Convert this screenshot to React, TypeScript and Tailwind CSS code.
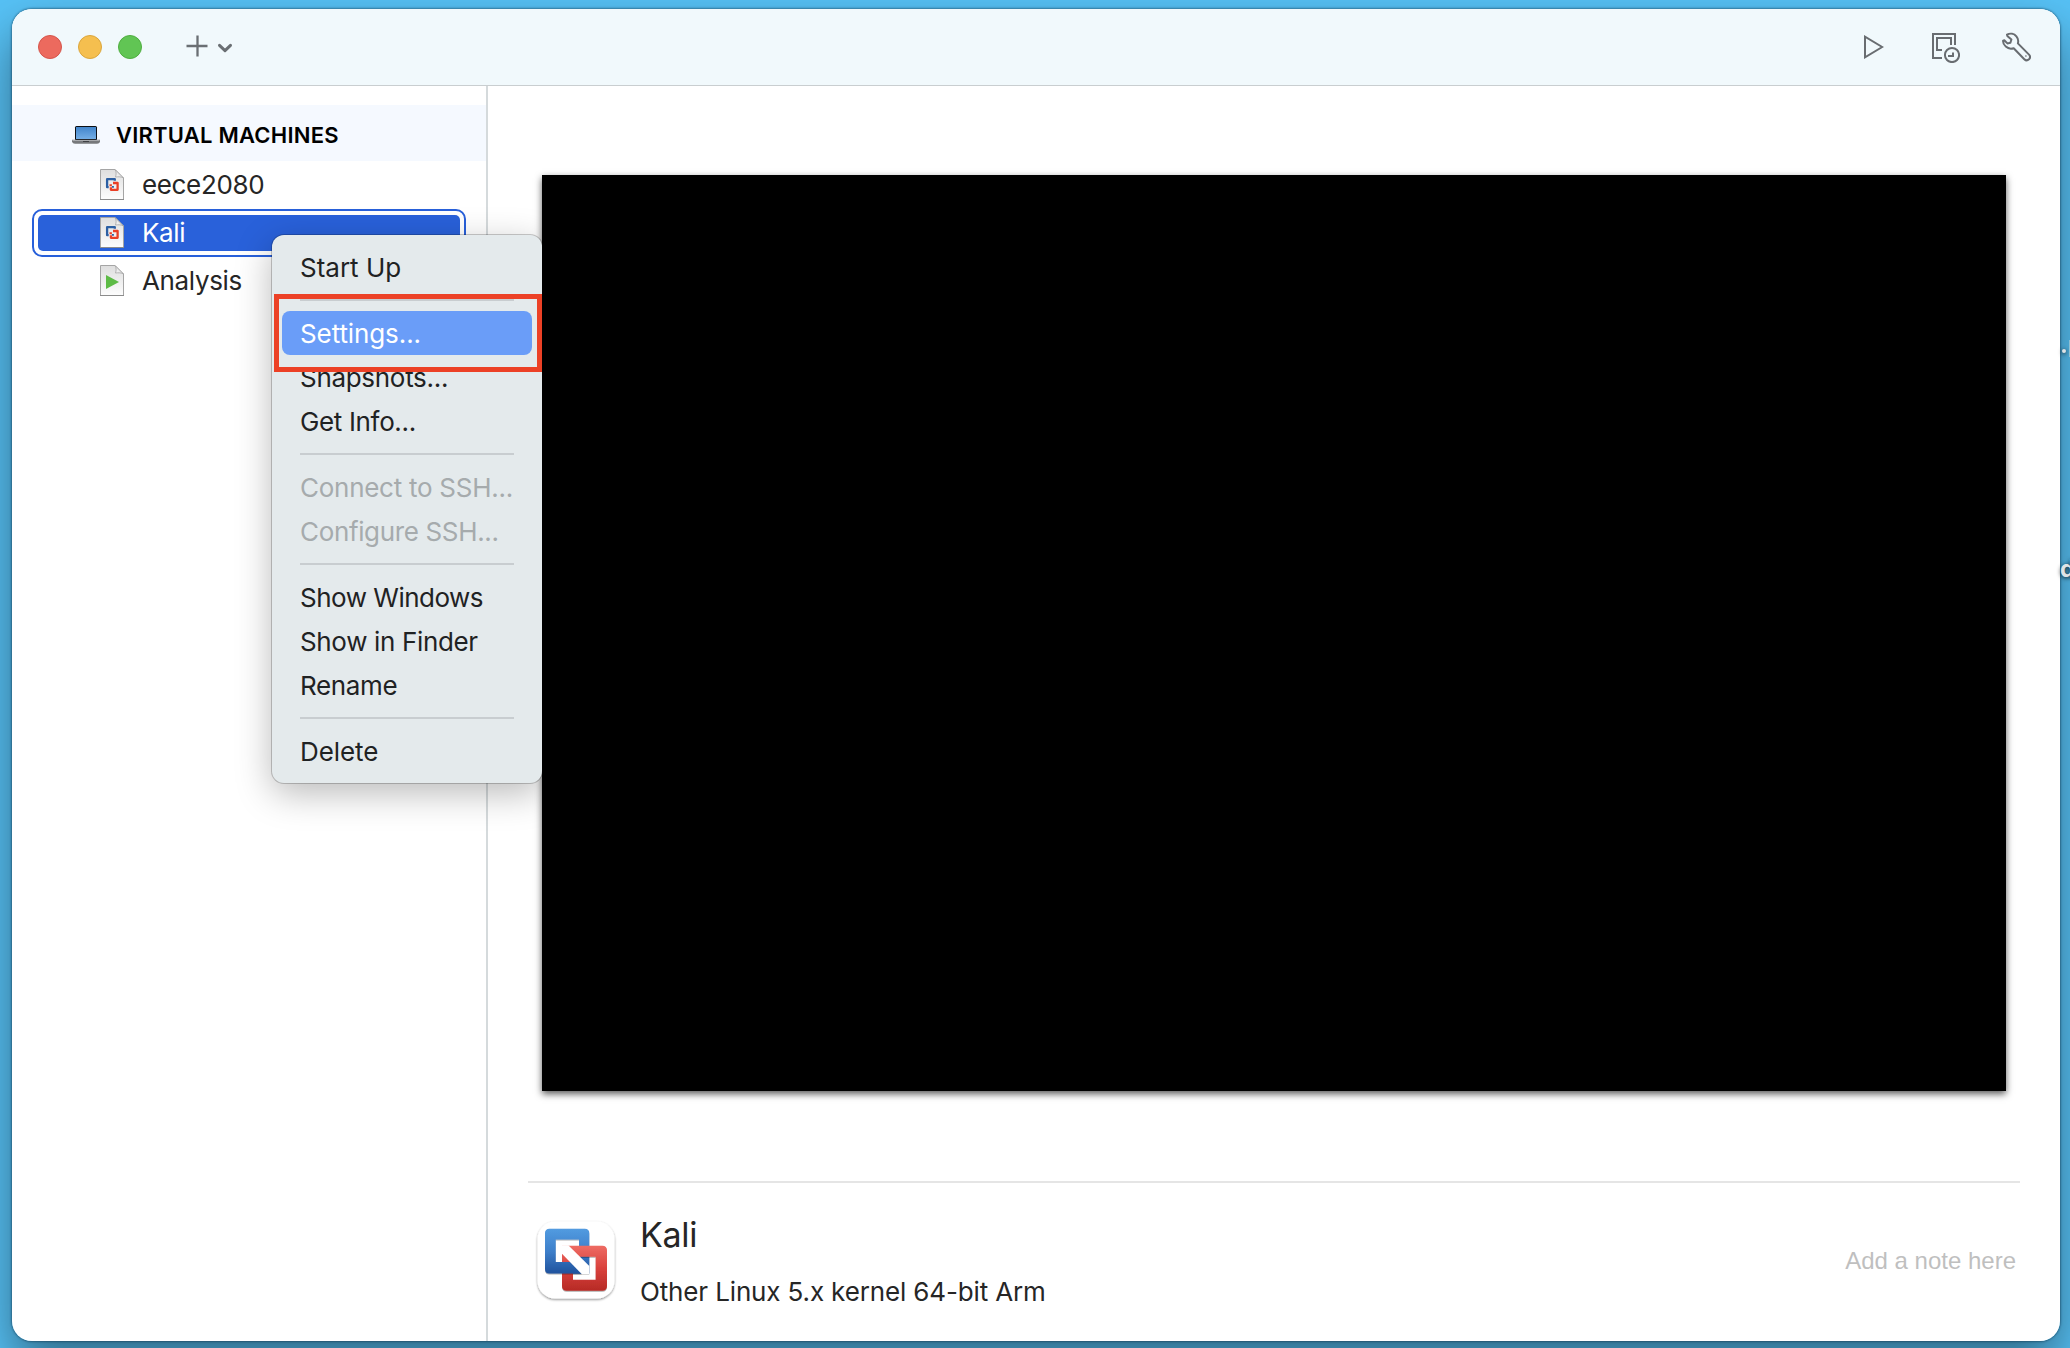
import React from "react";

const SANS = "font-['Inter','Liberation_Sans',sans-serif]";

function PlusIcon() {
  return (
    <svg width="22" height="22" viewBox="0 0 22 22" fill="none" stroke="#6a6f73" strokeWidth="2.3">
      <path d="M11.500 .5v21M.5 11h21" />
    </svg>
  );
}

function ChevronIcon() {
  return (
    <svg width="16" height="12" viewBox="0 0 16 12" fill="none" stroke="#6a6f73" strokeWidth="3" strokeLinecap="round" strokeLinejoin="round">
      <path d="M2.500 3.300 8 8.600l5.500-5.300" />
    </svg>
  );
}

function PlayIcon() {
  return (
    <svg width="20" height="24" viewBox="0 0 20 24" fill="none" stroke="#696d71" strokeWidth="2">
      <path d="M1 1.700v20.600L18.200 12z" />
    </svg>
  );
}

function SnapshotIcon() {
  return (
    <svg width="28" height="30" viewBox="0 0 28 30" fill="none" stroke="#696d71" strokeWidth="2">
      <path d="M10 25H1V1h22v11" />
      <path d="M10 17H5V5h14v7" />
      <circle cx="20" cy="22" r="7.100" />
      <path d="M21 19.500V23h-5" />
    </svg>
  );
}

function WrenchIcon() {
  return (
    <svg width="29" height="30" viewBox="0 0 29 30" fill="none" stroke="#696d71" strokeWidth="2" strokeLinejoin="round">
      <path d="M5 2.600C8.200.900 12.200 1.600 14.400 4.300c1.700 2 2.200 4.500 1.500 7.100L27 22.600c1.300 1.400 1.200 3.400 0 4.700-1.300 1.200-3.400 1.200-4.700-.1L11.700 16.200c-2.800.9-5.700.4-7.900-1.600C1.700 12.800.900 10.700 1.100 8.600l1.200-.3 3.100 3.100 3-.6 1-3.300L5.300 3.900z" />
      <path d="M23.300 24h1.200" strokeWidth="1.600" />
    </svg>
  );
}

function LaptopIcon() {
  return (
    <svg width="28" height="20" viewBox="0 0 28 20">
      <defs>
        <linearGradient id="screen" x1="0" y1="0" x2="0" y2="1">
          <stop offset="0" stopColor="#4285cb" />
          <stop offset="1" stopColor="#74aee6" />
        </linearGradient>
      </defs>
      <rect x="3" y="1" width="22" height="14.500" rx="1.500" fill="#0c0f14" />
      <rect x="4" y="2" width="20" height="12" fill="url(#screen)" />
      <path d="M0 14.800h28v2c-.5 1.300-1.500 2-3 2H3c-1.500 0-2.500-.7-3-2z" fill="#77797c" />
      <path d="M.5 15.500h27" stroke="#a8aaad" />
      <path d="M11 16.500h6" stroke="#3f4144" />
    </svg>
  );
}

function DocIcon({ kind }: { kind: "vm" | "play" }) {
  return (
    <svg width="26" height="34" viewBox="0 0 26 34">
      <defs>
        <linearGradient id="paper" x1="0" y1="0" x2="0" y2="1">
          <stop offset="0" stopColor="#dedede" />
          <stop offset="1" stopColor="#fdfdfd" />
        </linearGradient>
        <linearGradient id="fold" x1="0" y1="1" x2="1" y2="0">
          <stop offset="0" stopColor="#fff" />
          <stop offset="1" stopColor="#c9c9c9" />
        </linearGradient>
      </defs>
      <path d="M1.500 1.500H16l8.500 8.500v21.500h-23z" fill="url(#paper)" stroke="#a5a5a5" />
      <path d="M1 31.500h24" stroke="#8c8c8c" />
      <path d="M16 1.500c1.500 2.500 1.300 5 .5 7.500 3-.4 6-.3 8 1z" fill="url(#fold)" stroke="#a5a5a5" strokeWidth=".8" />
      {kind === "vm" ? (
        <g fill="none" strokeWidth="2.300" strokeLinejoin="round">
          <path d="M9.700 19.200H8.100V11.200h7.700v1.600" stroke="#2c5fa3" />
          <path d="M14 15h4.600v6.800h-6.700v-2.600" stroke="#ea3f25" />
          <path d="M10.500 17.300h2.400" stroke="#ea3f25" strokeWidth="2" />
          <path d="M12.900 18.900h2" stroke="#2c5fa3" strokeWidth="1.600" />
        </g>
      ) : (
        <path d="M7 11v14L20 18z" fill="#5dbb46" />
      )}
    </svg>
  );
}

function FusionLogo() {
  return (
    <svg width="82" height="84" viewBox="0 0 82 84">
      <defs>
        <linearGradient id="blue" gradientUnits="userSpaceOnUse" x1="0" y1="10" x2="0" y2="54.500">
          <stop offset="0" stopColor="#529be0" />
          <stop offset=".5" stopColor="#3d7fca" />
          <stop offset="1" stopColor="#20529d" />
        </linearGradient>
        <linearGradient id="red" gradientUnits="userSpaceOnUse" x1="0" y1="27" x2="0" y2="72">
          <stop offset="0" stopColor="#ee6b63" />
          <stop offset=".5" stopColor="#d9413c" />
          <stop offset="1" stopColor="#b62a25" />
        </linearGradient>
        <filter id="soft" x="-20%" y="-20%" width="140%" height="140%">
          <feDropShadow dx="0" dy="1.200" stdDeviation="1" floodColor="#000" floodOpacity=".45" />
        </filter>
        <filter id="edge" x="-20%" y="-20%" width="140%" height="140%">
          <feDropShadow dx="0" dy=".8" stdDeviation=".4" floodColor="#000" floodOpacity=".4" />
        </filter>
      </defs>
      <rect x="2.500" y="2.500" width="77" height="77" rx="17.500" fill="#fff" filter="url(#soft)" />
      <path
        fillRule="evenodd"
        fill="url(#blue)"
        filter="url(#edge)"
        d="M14.500 9.800h35.300q4.500 0 4.500 4.500v40.200H14.500q-4.500 0-4.500-4.500V14.300q0-4.500 4.500-4.500zM20.700 20.500v22.600H44V20.500z"
      />
      <path
        fillRule="evenodd"
        fill="url(#red)"
        filter="url(#edge)"
        d="M27 26.800h40.200q4.800 0 4.800 4.800V67q0 4.800-4.800 4.800H31.800Q27 71.800 27 67zM38 37.800v23h22.700v-23z"
      />
      <path d="M27 43.100h8.500l11.400 11.400H27z" fill="url(#blue)" filter="url(#edge)" />
      <path d="M26.500 26.300h6.800L54.300 47.100v8H46.700L27 34.800z" fill="#fff" />
    </svg>
  );
}

function VmRow({ name, kind, selected }: { name: string; kind: "vm" | "play"; selected?: boolean }) {
  return (
    <div
      className={
        selected
          ? "ml-5 mr-[20px] h-12 rounded-[10px] border-2 border-[#2860da] bg-white p-1"
          : "ml-5 mr-[20px] h-12 p-1.5"
      }
    >
      <div
        className={
          selected
            ? "flex h-full items-center gap-[17px] rounded-[5px] bg-[#2961da] pl-[61px] text-white"
            : "flex h-full items-center gap-[17px] pl-[61px] text-[#262626]"
        }
      >
        <DocIcon kind={kind} />
        <span className="text-[26px] leading-none tracking-[-0.35px]">{name}</span>
      </div>
    </div>
  );
}

type Entry = { label: string; state?: "active" | "disabled"; tracking?: string } | "separator";

const MENU: Entry[] = [
  { label: "Start Up", tracking: "tracking-normal" },
  "separator",
  { label: "Settings...", state: "active", tracking: "tracking-[-0.1px]" },
  { label: "Snapshots...", tracking: "tracking-[-0.3px]" },
  { label: "Get Info...", tracking: "tracking-[-0.35px]" },
  "separator",
  { label: "Connect to SSH...", state: "disabled", tracking: "tracking-[-0.27px]" },
  { label: "Configure SSH...", state: "disabled", tracking: "tracking-[-0.35px]" },
  "separator",
  { label: "Show Windows", tracking: "tracking-[-0.5px]" },
  { label: "Show in Finder", tracking: "tracking-[-0.35px]" },
  { label: "Rename", tracking: "tracking-[-0.35px]" },
  "separator",
  { label: "Delete", tracking: "tracking-[-0.1px]" },
];

function ContextMenu() {
  return (
    <div className="absolute left-[260px] top-[226px] w-[270px] rounded-xl bg-[#e4eaec] p-2.5 shadow-[0_0_0_1px_rgba(0,0,0,0.2),0_10px_36px_rgba(0,0,0,0.28)]">
      {MENU.map((entry, i) =>
        entry === "separator" ? (
          <div key={i} className="flex h-[22px] items-center pl-[18px] pr-[18px]">
            <div className="h-0.5 w-full bg-[#c8cdd0]" />
          </div>
        ) : (
          <div
            key={i}
            className={
              "flex h-11 items-center whitespace-nowrap rounded-lg pl-[18px] pt-[2px] text-[26px] leading-none " +
              (entry.tracking ?? "") +
              (entry.state === "active"
                ? " bg-[#6a9df8] text-white"
                : entry.state === "disabled"
                  ? " text-[#a6abad]"
                  : " text-[#1f2223]")
            }
          >
            {entry.label}
          </div>
        ),
      )}
      <div className="absolute left-0.5 top-[59px] h-[78px] w-[268px] border-[5px] border-[#ec4126]" />
    </div>
  );
}

function DesktopLabels() {
  return (
    <div className="absolute right-0 top-0 h-full w-[10px] text-[24px] font-bold leading-none text-[#dfe3e6] [text-shadow:0_1px_4px_rgba(0,0,0,0.8)]">
      <div className="absolute left-[2px] top-[349px] size-1 rounded-full bg-[#dfe3e6] shadow-[0_1px_4px_rgba(0,0,0,0.8)]" />
      <div className="absolute right-0 top-[340px] h-[17px] w-px bg-[#8fc0d4]" />
      <span className="absolute left-0 top-[557px]">d</span>
    </div>
  );
}

export default function App() {
  return (
    <div className={`relative h-[1348px] w-[2070px] overflow-hidden bg-[#57c2f6] pl-3 pt-[9px] ${SANS}`}>
      <div className="relative h-[1332px] w-[2048px] rounded-[20px] shadow-[0_0_2px_1px_rgba(0,30,50,0.4),0_24px_50px_rgba(0,0,0,0.45)]">
        <div className="flex h-full flex-col overflow-hidden rounded-[20px] bg-white">
          <header className="flex h-[77px] shrink-0 items-center border-b border-[#c9ced0] bg-[#f1f9fc] pl-[26px] pr-[29px]">
            <div className="flex gap-4">
              <div className="size-6 rounded-full border border-[#d5554b] bg-[#ec6a5e]" />
              <div className="size-6 rounded-full border border-[#dba63c] bg-[#f5bf4f]" />
              <div className="size-6 rounded-full border border-[#4fae40] bg-[#61c554]" />
            </div>
            <div className="ml-11 flex items-center gap-[9px] pb-[3px]">
              <PlusIcon />
              <div className="pt-[5px]">
                <ChevronIcon />
              </div>
            </div>
            <div className="ml-auto flex items-center">
              <PlayIcon />
              <div className="ml-12 pt-0.5">
                <SnapshotIcon />
              </div>
              <div className="ml-[42px]">
                <WrenchIcon />
              </div>
            </div>
          </header>
          <div className="flex min-h-0 flex-1">
            <aside className="w-[476px] shrink-0 border-r-2 border-[#d5dadc] pt-[19px]">
              <div className="flex h-14 items-center gap-[16px] bg-[#f5f9ff] pl-[60px] pt-[3px]">
                <LaptopIcon />
                <span className="text-[22px] font-semibold leading-none tracking-[0.22px] text-black">VIRTUAL MACHINES</span>
              </div>
              <VmRow name="eece2080" kind="vm" />
              <VmRow name="Kali" kind="vm" selected />
              <VmRow name="Analysis" kind="play" />
            </aside>
            <main className="flex min-w-0 flex-1 flex-col pl-10 pr-10 pt-[89px]">
              <div className="ml-[14px] h-[916px] w-[1464px] bg-black shadow-[0_3px_7px_rgba(0,0,0,0.65)]" />
              <div className="mt-[90px] h-0.5 bg-[#e5e5e5]" />
              <div className="mt-[30px] flex items-center pl-[7px] pr-1">
                <div className="pt-px">
                  <FusionLogo />
                </div>
                <div className="ml-[23px] flex flex-col text-[#262626]">
                  <span className="text-[34px] leading-[44px] tracking-[-0.3px]">Kali</span>
                  <span className="mt-[19px] text-[26px] leading-8 tracking-[-0.14px]">Other Linux 5.x kernel 64-bit Arm</span>
                </div>
                <span className="ml-auto pt-px font-['Liberation_Sans',sans-serif] text-2xl text-[#bfbfbf]">Add a note here</span>
              </div>
            </main>
          </div>
        </div>
        <ContextMenu />
      </div>
      <DesktopLabels />
    </div>
  );
}
